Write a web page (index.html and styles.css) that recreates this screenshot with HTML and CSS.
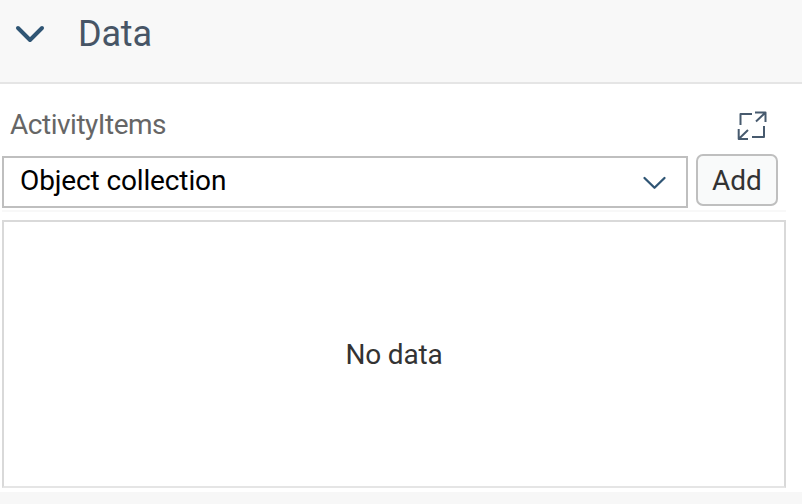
FILE: index.html
```html
<!DOCTYPE html>
<html lang="en">
<head>
<meta charset="utf-8">
<title>Data</title>
<link rel="stylesheet" href="styles.css">
</head>
<body>
<header class="panel-header">
  <svg class="toggle" width="30" height="20" viewBox="0 0 30 20"><path d="M3 4 L15 16 L27 4"/></svg>
  <h1><span class="title">Data</span></h1>
</header>
<main>
  <div class="label-row">
    <span class="label">ActivityItems</span>
    <svg class="expand" width="30" height="31" viewBox="0 0 30 31"><path d="M15 5H3.500V16M18 3.500H28.500V13M28.500 3.500L19 12.500M15 28H27V17M1.700 20V30H11M1.700 30L11 21"/></svg>
  </div>
  <div class="controls">
    <div class="select"><span class="value">Object collection</span>
      <svg class="arrow" width="24" height="14" viewBox="0 0 24 14"><path d="M2.500 3L12.500 12.800L22.500 3"/></svg>
    </div>
    <button class="add"><span class="add-text">Add</span></button>
  </div>
  <div class="divider"></div>
  <section class="list"><span class="empty">No data</span></section>
</main>
<footer></footer>
</body>
</html>
```
FILE: styles.css
```css
* { box-sizing: border-box; }
body { margin: 0; height: 504px; overflow: hidden; display: flex; flex-direction: column; background: #fff; font-family: Roboto, sans-serif; font-size: 28px; color: #333; }
svg { fill: none; flex: none; overflow: visible; }
.panel-header { height: 84px; padding: 0 0 14px 15px; display: flex; align-items: center; background: #f8f8f8; border-bottom: 2px solid #e5e5e5; }
.toggle { stroke: #2f5574; stroke-width: 4; stroke-linecap: round; stroke-linejoin: round; }
h1 { margin: 0 0 0 33px; font-size: 36px; font-weight: 400; line-height: 42px; color: #475566; }
.title { letter-spacing: -0.2px; }
main { width: 786px; padding-left: 2px; }
.label-row { height: 70px; padding: 11px 19px 0 8px; display: flex; align-items: center; justify-content: space-between; color: #666; }
.label { letter-spacing: -0.48px; }
.expand { stroke: #475a6e; stroke-width: 2; stroke-linejoin: round; }
.controls { display: flex; gap: 8px; height: 56px; }
.select { margin-top: 2px; width: 686px; height: 52px; padding: 0 20px 0 16px; display: flex; align-items: center; justify-content: space-between; border: 2px solid #bfbfbf; color: #000; }
.value { padding-bottom: 4px; letter-spacing: -0.13px; }
.arrow { stroke: #2f5574; stroke-width: 2.3; stroke-linecap: round; stroke-linejoin: round; }
.add { width: 82px; height: 52px; padding: 0; border: 2px solid #bfbfbf; border-radius: 7px; background: #f9fafa; font: inherit; color: #333; }
.divider { height: 2px; background: #f8f8f8; }
.list { margin-top: 8px; height: 268px; display: flex; align-items: center; justify-content: center; border: 2px solid #d9d9d9; border-bottom-color: #e5e5e5; }
.empty { letter-spacing: -0.2px; }
footer { margin-top: 4px; flex: 1; background: #f7f7f7; }
```
